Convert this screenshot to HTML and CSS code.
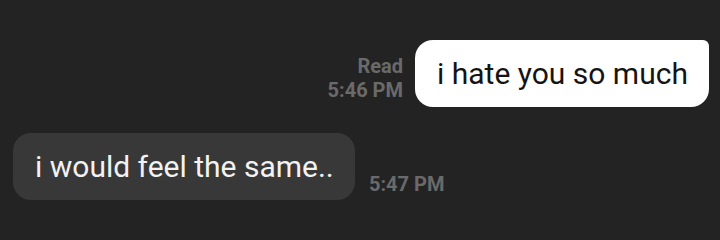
FILE: index.html
```html
<!DOCTYPE html>
<html>
<head>
<meta charset="utf-8">
<link rel="stylesheet" href="styles.css">
</head>
<body>
<div class="chat">
  <div class="row row-sent">
    <div class="meta meta-sent">
      <span>Read</span>
      <span>5:46 PM</span>
    </div>
    <div class="bubble bubble-sent">i hate you so much</div>
  </div>
  <div class="row row-recv">
    <div class="bubble bubble-recv">i would feel the same..</div>
    <div class="meta meta-recv">5:47 PM</div>
  </div>
</div>
</body>
</html>
```
FILE: styles.css
```css
html, body {
  margin: 0;
  padding: 0;
  background: #232323;
}
.chat {
  width: 720px;
  height: 240px;
  padding-top: 40px;
  box-sizing: border-box;
  display: flex;
  flex-direction: column;
  gap: 26px;
  font-family: Roboto, "Liberation Sans", sans-serif;
}
.row {
  display: flex;
  align-items: flex-end;
}
.row-sent {
  justify-content: flex-end;
  padding-right: 11px;
  gap: 12px;
}
.row-recv {
  padding-left: 13px;
  gap: 14px;
}
.bubble {
  height: 67px;
  box-sizing: border-box;
  display: flex;
  align-items: center;
  font-size: 30px;
}
.bubble-sent {
  width: 294px;
  background: #ffffff;
  color: #141414;
  padding-left: 22px;
  border-radius: 18px 6px 18px 18px;
}
.bubble-recv {
  width: 342px;
  background: #383838;
  color: #f2f2f2;
  padding-left: 22px;
  border-radius: 18px;
}
.meta {
  color: #6a6a6a;
  font-weight: 700;
  font-size: 20px;
  line-height: 24px;
}
.meta-sent {
  display: flex;
  flex-direction: column;
  align-items: flex-end;
  margin-bottom: 5px;
}
.meta-recv {
  margin-bottom: 4px;
}
```
